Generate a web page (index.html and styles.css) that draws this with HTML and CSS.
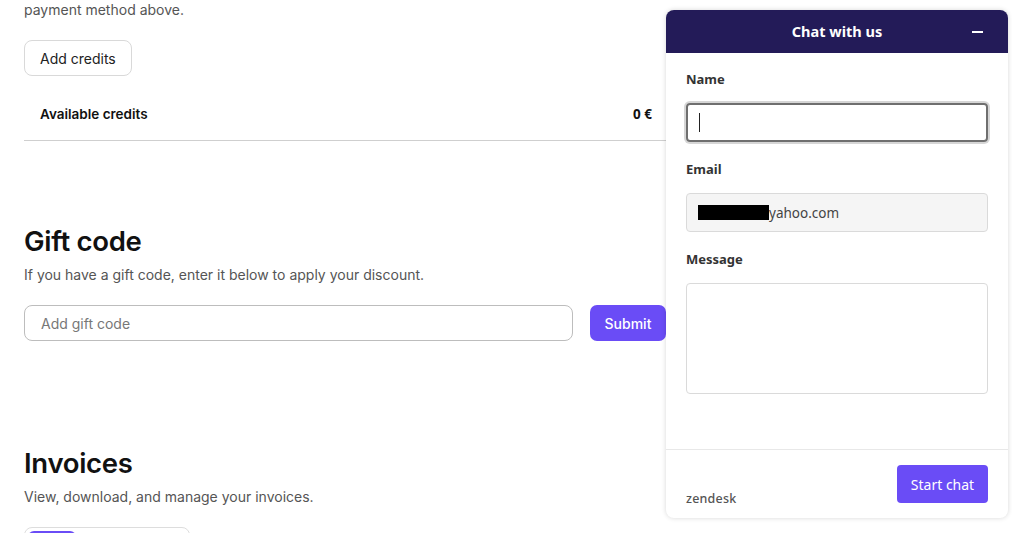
FILE: index.html
```html
<!DOCTYPE html>
<html>
<head>
<meta charset="utf-8">
<link rel="stylesheet" href="styles.css">
</head>
<body>
<main class="page">
  <p class="lead">payment method above.</p>
  <button class="btn-outline">Add credits</button>
  <div class="credits-row">
    <span class="credits-label">Available credits</span>
    <span class="credits-value">0 €</span>
  </div>

  <section class="section gift">
    <h2>Gift code</h2>
    <p class="desc">If you have a gift code, enter it below to apply your discount.</p>
    <div class="gift-form">
      <input class="gift-input" type="text" placeholder="Add gift code">
      <button class="btn-primary">Submit</button>
    </div>
  </section>

  <section class="section invoices">
    <h2>Invoices</h2>
    <p class="desc">View, download, and manage your invoices.</p>
    <div class="tabs"><span class="tab-active"></span></div>
  </section>
</main>

<aside class="chat">
  <header class="chat-head">
    <span class="chat-title">Chat with us</span>
    <span class="chat-min"></span>
  </header>
  <div class="chat-body">
    <label class="field-label">Name</label>
    <div class="field focused"><span class="caret"></span></div>
    <label class="field-label">Email</label>
    <div class="field filled"><span class="redact"></span><span>yahoo.com</span></div>
    <label class="field-label">Message</label>
    <div class="field area"></div>
  </div>
  <footer class="chat-foot">
    <span class="zendesk">zendesk</span>
    <button class="btn-chat">Start chat</button>
  </footer>
</aside>
</body>
</html>
```

FILE: styles.css
```css
* { box-sizing: border-box; }
html, body { margin: 0; padding: 0; background: #fff; }
body {
  font-family: Inter, "Liberation Sans", sans-serif;
  color: #111;
  width: 1012px;
  height: 533px;
  overflow: hidden;
  position: relative;
}
.page {
  width: 642px;
  margin-left: 24px;
  padding-top: 1px;
}
.lead {
  margin: 0;
  margin-top: -1px;
  font-size: 14px;
  line-height: 20px;
  color: #555;
}
.btn-outline {
  margin-top: 20px;
  height: 36px;
  padding: 0 15px;
  font-family: Inter, sans-serif;
  font-size: 14px;
  color: #222;
  background: #fff;
  border: 1px solid #d9d9d9;
  border-radius: 8px;
}
.credits-row {
  margin-top: 10px;
  height: 55px;
  display: flex;
  align-items: center;
  justify-content: space-between;
  padding: 2px 14px 0 16px;
  border-bottom: 1px solid #cfcfcf;
}
.credits-label { font-size: 13.5px; font-weight: 600; color: #111; }
.credits-value { font-family: "Open Sans", sans-serif; font-size: 13.5px; font-weight: 700; color: #111; }

.section h2 {
  margin: 0;
  font-size: 27.5px;
  font-weight: 600;
  letter-spacing: -0.3px;
  line-height: 32px;
  color: #111;
}
.gift { margin-top: 84px; }
.invoices { margin-top: 106px; }
.desc {
  margin: 8px 0 0;
  font-size: 14px;
  line-height: 20px;
  color: #555;
}
.gift-form {
  margin-top: 20px;
  display: flex;
  gap: 17px;
}
.gift-input {
  flex: 1;
  height: 36px;
  border: 1px solid #bdbdbd;
  border-radius: 8px;
  padding: 0 16px;
  font-family: Inter, sans-serif;
  font-size: 14px;
  color: #111;
}
.gift-input::placeholder { color: #777; }
.btn-primary {
  width: 76px;
  height: 36px;
  border: none;
  border-radius: 7px;
  background: #6a4cf6;
  color: #fff;
  font-family: Inter, sans-serif;
  font-size: 14px;
  font-weight: 500;
}
.tabs {
  margin-top: 20px;
  width: 166px;
  height: 30px;
  border: 1px solid #ddd;
  border-radius: 8px;
  padding: 3px;
}
.tab-active {
  display: block;
  width: 48px;
  height: 22px;
  border-radius: 6px;
  background: #6a4cf6;
}

/* chat widget */
.chat {
  position: absolute;
  left: 666px;
  top: 10px;
  width: 342px;
  height: 508px;
  background: #fff;
  border-radius: 8px;
  box-shadow: 0 0 5px rgba(0,0,0,0.16);
  display: flex;
  flex-direction: column;
  overflow: hidden;
  font-family: "Noto Sans", "Open Sans", sans-serif;
}
.chat-head {
  height: 43px;
  background: #231b58;
  color: #fff;
  display: flex;
  align-items: center;
  justify-content: center;
  position: relative;
  flex: none;
}
.chat-title { font-size: 14.5px; font-weight: 700; margin-top: -2px; }
.chat-min {
  position: absolute;
  right: 25px;
  top: 21px;
  width: 11px;
  height: 2px;
  background: #fff;
}
.chat-body {
  flex: 1;
  padding: 16px 20px 0;
  display: flex;
  flex-direction: column;
}
.field-label {
  font-size: 13px;
  font-weight: 700;
  color: #333;
  line-height: 20px;
  margin-bottom: 14px;
}
.field {
  height: 39px;
  border: 1px solid #dadada;
  border-radius: 4px;
  margin-bottom: 17px;
  display: flex;
  align-items: center;
  padding: 0 11px;
  font-size: 13.5px;
  color: #444;
}
.field.focused {
  border: 2px solid #6f6f6f;
  box-shadow: 0 0 0 2px #d6d6d6;
}
.caret { width: 1px; height: 19px; background: #222; }
.field.filled { background: #f5f5f5; }
.redact { display: inline-block; width: 71px; height: 15px; background: #000; margin-right: 0; }
.field.area { height: 111px; }
.chat-foot {
  flex: none;
  height: 69px;
  border-top: 1px solid #e8e8e8;
  display: flex;
  align-items: flex-start;
  justify-content: space-between;
  padding: 15px 20px 0;
}
.zendesk {
  margin-top: 25px;
  font-family: "Noto Sans", sans-serif;
  font-size: 12.5px;
  font-weight: 500;
  color: #555;
  letter-spacing: 0.2px;
}
.btn-chat {
  width: 91px;
  height: 38px;
  border: none;
  border-radius: 4px;
  background: #6a4cf6;
  color: #fff;
  font-family: "Noto Sans", sans-serif;
  font-size: 14px;
}
```
